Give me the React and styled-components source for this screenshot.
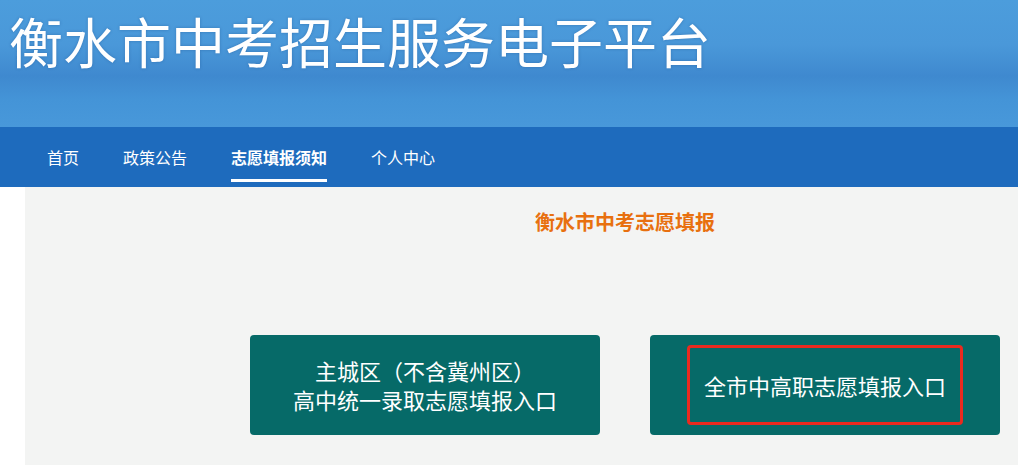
import React from "react";
import styled, { createGlobalStyle } from "styled-components";

const Global = createGlobalStyle`
  html, body { margin: 0; padding: 0; overflow: hidden; background: #fff; }
  body { font-family: "Microsoft YaHei", "Noto Sans CJK SC", "Noto Sans", sans-serif; }
`;

const Page = styled.div`
  width: 1018px;
  min-height: 465px;
  overflow: hidden;
`;

const Banner = styled.header`
  height: 127px;
  background: linear-gradient(180deg, #4c9ddc 0%, #4a98d9 35%, #3f89cf 60%, #4494d7 78%, #4898da 100%);
  box-sizing: border-box;
  padding: 6px 0 0 9px;
`;

const Title = styled.h1`
  margin: 0;
  color: #fff;
  font-size: 54px;
  font-weight: 400;
  line-height: 70px;
  letter-spacing: 0;
  white-space: nowrap;
  text-shadow: 0 0 3px rgba(20, 60, 120, 0.35);
`;

const NavBar = styled.nav`
  height: 60px;
  background: #1e6bbd;
`;

const NavList = styled.ul`
  list-style: none;
  margin: 0 0 0 25px;
  padding: 0;
  display: flex;
  height: 100%;
`;

const NavItem = styled.li`
  position: relative;
  padding: 0 22px;
  display: flex;
  align-items: center;
  color: #fff;
  font-size: 16px;
  font-weight: ${(p) => (p.$active ? 700 : 400)};
  white-space: nowrap;
  &::after {
    content: "";
    display: ${(p) => (p.$active ? "block" : "none")};
    position: absolute;
    left: 22px;
    right: 22px;
    bottom: 5px;
    height: 3px;
    background: #fff;
  }
`;

const Panel = styled.main`
  margin-left: 25px;
  width: 1200px;
  min-height: 278px;
  background: #f3f4f3;
  box-sizing: border-box;
  padding-top: 22px;
  display: flex;
  flex-direction: column;
  align-items: center;
`;

const Subtitle = styled.h2`
  margin: 0;
  color: #e8700f;
  font-size: 20px;
  font-weight: 700;
  line-height: 26px;
`;

const ButtonRow = styled.div`
  display: flex;
  gap: 50px;
  margin-top: 100px;
`;

const EntryButton = styled.a`
  width: 350px;
  height: 100px;
  border-radius: 4px;
  background: #066a68;
  color: #fff;
  font-size: 22px;
  line-height: 29px;
  text-align: center;
  display: flex;
  align-items: center;
  justify-content: center;
  text-decoration: none;
  box-sizing: border-box;
`;

const Paren = styled.span`
  font-family: "Noto Sans CJK TC", "Noto Sans CJK SC", sans-serif;
`;

const Highlight = styled.span`
  width: 276px;
  height: 80px;
  box-sizing: border-box;
  border: 3px solid #e92a1f;
  border-radius: 4px;
  display: flex;
  align-items: center;
  justify-content: center;
  white-space: nowrap;
`;

export default function App() {
  return (
    <Page>
      <Global />
      <Banner>
        <Title>衡水市中考招生服务电子平台</Title>
      </Banner>
      <NavBar>
        <NavList>
          <NavItem>首页</NavItem>
          <NavItem>政策公告</NavItem>
          <NavItem $active>志愿填报须知</NavItem>
          <NavItem>个人中心</NavItem>
        </NavList>
      </NavBar>
      <Panel>
        <Subtitle>衡水市中考志愿填报</Subtitle>
        <ButtonRow>
          <EntryButton>
            <span>
              主城区<Paren>（</Paren>不含冀州区<Paren>）</Paren>
              <br />
              高中统一录取志愿填报入口
            </span>
          </EntryButton>
          <EntryButton>
            <Highlight>全市中高职志愿填报入口</Highlight>
          </EntryButton>
        </ButtonRow>
      </Panel>
    </Page>
  );
}
